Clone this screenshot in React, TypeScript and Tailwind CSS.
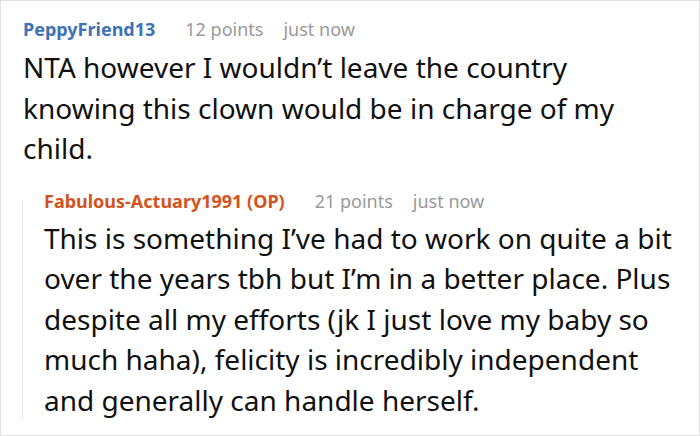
import React from 'react'

type CommentData = {
  author: string
  points: number
  time: string
  body: string
}

const parent: CommentData = {
  author: 'PeppyFriend13',
  points: 12,
  time: 'just now',
  body: 'NTA however I wouldn’t leave the country knowing this clown would be in charge of my child.',
}

const reply: CommentData = {
  author: 'Fabulous-Actuary1991 (OP)',
  points: 21,
  time: 'just now',
  body: 'This is something I’ve had to work on quite a bit over the years tbh but I’m in a better place. Plus despite all my efforts (jk I just love my baby so much haha), felicity is incredibly independent and generally can handle herself.',
}

const Meta: React.FC<{ c: CommentData; op?: boolean }> = ({ c, op }) => (
  <div className="flex items-baseline text-[18px] leading-[24px]">
    <span className={`font-bold ${op ? 'text-[#d4521c]' : 'text-[#3d72b8]'}`}>{c.author}</span>
    <span className="ml-[30px] text-[#999999]">{c.points} points</span>
    <span className="ml-[20px] text-[#999999]">{c.time}</span>
  </div>
)

const App: React.FC = () => {
  return (
    <div
      className="w-[700px] h-[436px] overflow-hidden bg-white border border-[#e2e2e2] text-[#111111]"
      style={{ fontFamily: '"Noto Sans", "Open Sans", sans-serif' }}
    >
      <div className="pl-[22px] pr-4 pt-[16px]">
        <Meta c={parent} />
        <p className="mt-[6px] text-[28px] leading-[40.5px]">{parent.body}</p>
      </div>

      <div className="flex pl-[21px] mt-[20px]">
        <div className="w-px bg-[#e4e4e4] mt-[11px] mb-[1px] shrink-0" />
        <div className="pl-[21px] pr-4">
          <Meta c={reply} op />
          <p className="mt-[5px] text-[28px] leading-[40.5px]">{reply.body}</p>
        </div>
      </div>
    </div>
  )
}

export default App
